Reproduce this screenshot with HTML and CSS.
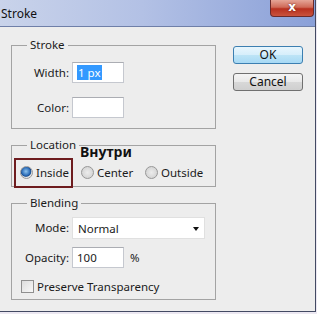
FILE: index.html
```html
<!DOCTYPE html>
<html lang="en">
<head>
  <meta charset="UTF-8" />
  <title>Stroke</title>
  <link rel="stylesheet" href="styles.css">
</head>
<body>
  <div class="window">
    <div class="titlebar">
      <span class="title">Stroke</span>
      <div class="close">x</div>
    </div>

    <div class="content">
      <div class="groups">
        <fieldset class="group group-stroke">
          <legend>Stroke</legend>
          <div class="row">
            <label>Width:</label>
            <div class="field"><span class="selected">1 px</span></div>
          </div>
          <div class="row">
            <label>Color:</label>
            <div class="field"></div>
          </div>
        </fieldset>

        <fieldset class="group group-location">
          <legend>Location</legend>
          <div class="radios">
            <span class="option"><span class="radio checked"></span>Inside</span>
            <span class="option"><span class="radio"></span>Center</span>
            <span class="option"><span class="radio"></span>Outside</span>
          </div>
        </fieldset>

        <fieldset class="group group-blending">
          <legend>Blending</legend>
          <div class="row">
            <label>Mode:</label>
            <div class="select">Normal<span class="arrow"></span></div>
          </div>
          <div class="row">
            <label>Opacity:</label>
            <div class="field">100</div>
            <span class="unit">%</span>
          </div>
          <div class="check-row">
            <span class="checkbox"></span>Preserve Transparency
          </div>
        </fieldset>

        <!-- annotation over the dialog -->
        <div class="mark"></div>
        <span class="note">Внутри</span>
      </div>

      <div class="buttons">
        <button class="btn btn-default">OK</button>
        <button class="btn">Cancel</button>
      </div>
    </div>
  </div>
</body>
</html>
```

FILE: styles.css
```css
body {
  margin: 0;
  background: #ece8f2;
  font-family: "Noto Sans", "Open Sans", sans-serif;
  font-size: 11.5px;
  color: #1b1b1b;
}

.window {
  width: 315px;
  height: 311px;
  background: #ededed;
  border-right: 1px solid #434a63;
  border-bottom: 1px solid #434a63;
}

.titlebar {
  height: 26px;
  display: flex;
  justify-content: space-between;
  align-items: flex-start;
  background: linear-gradient(to right, #c9d3ea 0%, #b3c1e5 45%, #8aa0d8 100%);
  border-bottom: 1px solid #6f7fa8;
}

.title {
  padding: 5px 0 0 1px;
  font-size: 12px;
  color: #111;
}

.close {
  width: 44px;
  height: 17px;
  margin-right: 1px;
  box-sizing: border-box;
  display: flex;
  align-items: center;
  justify-content: center;
  border: 1px solid #6b2a2a;
  border-top: none;
  border-radius: 0 0 4px 4px;
  background: linear-gradient(to bottom, #e5a597 0%, #cf6a58 45%, #b8301f 55%, #c9533e 100%);
  color: #fff;
  font-family: "DejaVu Sans", sans-serif;
  font-weight: bold;
  font-size: 12px;
  line-height: 12px;
  padding-bottom: 2px;
  text-shadow: 0 0 2px #5a1a12;
}

.content {
  display: flex;
  padding-top: 11px;
}

.groups {
  position: relative;
  margin-left: 11px;
  width: 205px;
}

.group {
  margin: 0;
  border: 1px solid #a3a3a3;
  box-sizing: border-box;
  width: 205px;
  min-width: 0;
}

.group legend {
  margin-left: 15px;
  padding: 0 3px;
  line-height: 14px;
}

.group-stroke {
  padding: 10px 0 10px 0;
}

.group-location {
  margin-top: 9px;
  padding: 12px 0 6px 0;
}

.group-blending {
  margin-top: 9px;
  padding: 7px 0 5px 0;
}

.row {
  display: flex;
  align-items: center;
  height: 21px;
}

.group-stroke .row + .row {
  margin-top: 14px;
}

.group-blending .row + .row {
  margin-top: 9px;
}

.row label {
  width: 57px;
  margin-right: 3px;
  text-align: right;
}

.field {
  width: 52px;
  height: 21px;
  box-sizing: border-box;
  background: #fff;
  border: 1px solid #c5c8cf;
  border-top-color: #abadb3;
  padding: 2px 0 0 4px;
  line-height: 15px;
}

.selected {
  background: #3399ff;
  color: #fff;
  padding: 0 1px;
}

.unit {
  margin-left: 6px;
}

.select {
  position: relative;
  width: 133px;
  height: 22px;
  box-sizing: border-box;
  background: #fff;
  border: 1px solid #e0e0e0;
  padding: 3px 0 0 5px;
  line-height: 15px;
}

.arrow {
  position: absolute;
  right: 5px;
  top: 9px;
  border-left: 3px solid transparent;
  border-right: 3px solid transparent;
  border-top: 4px solid #111;
}

.radios {
  display: grid;
  grid-template-columns: 61px 64px auto;
  align-items: center;
  height: 16px;
  padding-left: 8px;
}

.option {
  display: flex;
  align-items: center;
}

.radio {
  width: 13px;
  height: 13px;
  box-sizing: border-box;
  margin-right: 3px;
  border-radius: 50%;
  border: 1px solid #979797;
  background: radial-gradient(circle at 50% 50%, #ececec 0%, #d6d6d6 70%, #f6f6f6 100%);
}

.radio.checked {
  background: radial-gradient(circle at 45% 40%, #8fc4ee 0%, #2b6cb8 45%, #1c4f8f 55%, #e4e4e4 65%, #f4f4f4 100%);
}

.check-row {
  display: flex;
  align-items: center;
  height: 16px;
  margin-top: 10px;
  padding-left: 9px;
}

.checkbox {
  width: 13px;
  height: 13px;
  box-sizing: border-box;
  margin-right: 3px;
  border: 1px solid #8f8f8f;
  background: linear-gradient(135deg, #dcdcdc, #f8f8f8);
}

.mark {
  position: absolute;
  left: 3px;
  top: 120px;
  width: 59px;
  height: 30px;
  box-sizing: border-box;
  border: 2px solid #6e1c1f;
}

.note {
  position: absolute;
  left: 69px;
  top: 105px;
  font-size: 14px;
  font-weight: bold;
  line-height: 18px;
  color: #111;
}

.buttons {
  display: flex;
  flex-direction: column;
  gap: 9px;
  margin-left: 17px;
  padding-top: 8px;
}

.btn {
  width: 70px;
  height: 18px;
  padding: 0;
  font-family: inherit;
  font-size: 12px;
  line-height: 14px;
  color: #111;
  border: 1px solid #707070;
  border-radius: 3px;
  background: linear-gradient(to bottom, #f4f4f4 0%, #e8e8e8 50%, #d8d8d8 51%, #cfcfcf 100%);
}

.btn-default {
  border-color: #3c7fb1;
  background: linear-gradient(to bottom, #e8f6fd 0%, #d6eefb 50%, #bde4f6 51%, #a7d9f5 100%);
}
```
